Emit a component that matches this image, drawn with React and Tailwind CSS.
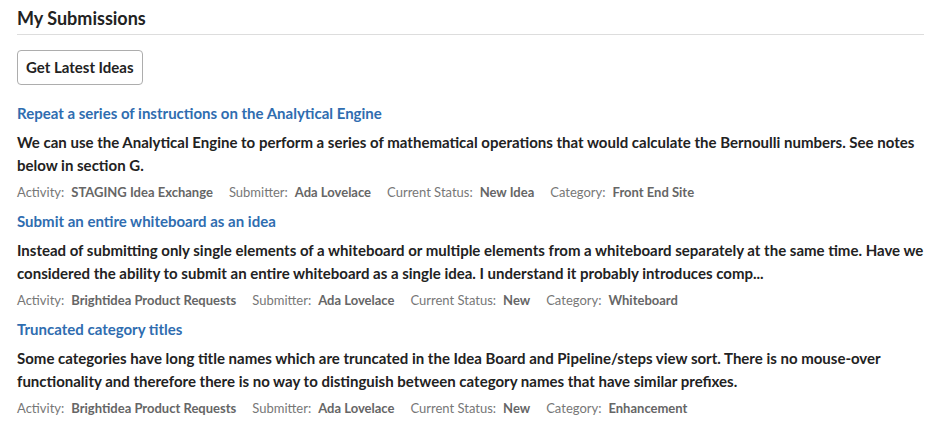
import React from 'react'

const ideas = [
  {
    title: 'Repeat a series of instructions on the Analytical Engine',
    body: 'We can use the Analytical Engine to perform a series of mathematical operations that would calculate the Bernoulli numbers. See notes below in section G.',
    activity: 'STAGING Idea Exchange',
    submitter: 'Ada Lovelace',
    status: 'New Idea',
    category: 'Front End Site',
  },
  {
    title: 'Submit an entire whiteboard as an idea',
    body: 'Instead of submitting only single elements of a whiteboard or multiple elements from a whiteboard separately at the same time. Have we considered the ability to submit an entire whiteboard as a single idea. I understand it probably introduces comp...',
    activity: 'Brightidea Product Requests',
    submitter: 'Ada Lovelace',
    status: 'New',
    category: 'Whiteboard',
  },
  {
    title: 'Truncated category titles',
    body: 'Some categories have long title names which are truncated in the Idea Board and Pipeline/steps view sort. There is no mouse-over functionality and therefore there is no way to distinguish between category names that have similar prefixes.',
    activity: 'Brightidea Product Requests',
    submitter: 'Ada Lovelace',
    status: 'New',
    category: 'Enhancement',
  },
]

function Meta({ label, value }) {
  return (
    <span className="flex items-baseline gap-[7px]">
      <span className="text-[#777]">{label}:</span>
      <span className="font-bold text-[#666]">{value}</span>
    </span>
  )
}

export default function App() {
  return (
    <div className="min-h-[430px] bg-white pl-[17px] pr-[14px] text-[#222]" style={{ fontFamily: 'Lato, "Open Sans", sans-serif' }}>
      <h2 className="pt-[6px] pb-[4px] text-[18px] leading-[24px] font-bold text-[#222] border-b border-[#ddd]">My Submissions</h2>

      <button className="mt-[15px] h-[35px] px-[8px] rounded-[4px] border border-[#adadad] bg-white text-[15px] font-bold text-[#222]">
        Get Latest Ideas
      </button>

      <div className="mt-[18px]">
        {ideas.map((idea, i) => (
          <div key={i} className="pb-[10px]">
            <a href="#" className="block text-[15px] leading-[20px] font-bold text-[#2f6db0]">{idea.title}</a>
            <p className="mt-[8px] text-[15px] leading-[23px] font-bold text-[#222]">{idea.body}</p>
            <div className="mt-[6px] flex gap-[16px] text-[13px] leading-[18px]">
              <Meta label="Activity" value={idea.activity} />
              <Meta label="Submitter" value={idea.submitter} />
              <Meta label="Current Status" value={idea.status} />
              <Meta label="Category" value={idea.category} />
            </div>
          </div>
        ))}
      </div>
    </div>
  )
}
